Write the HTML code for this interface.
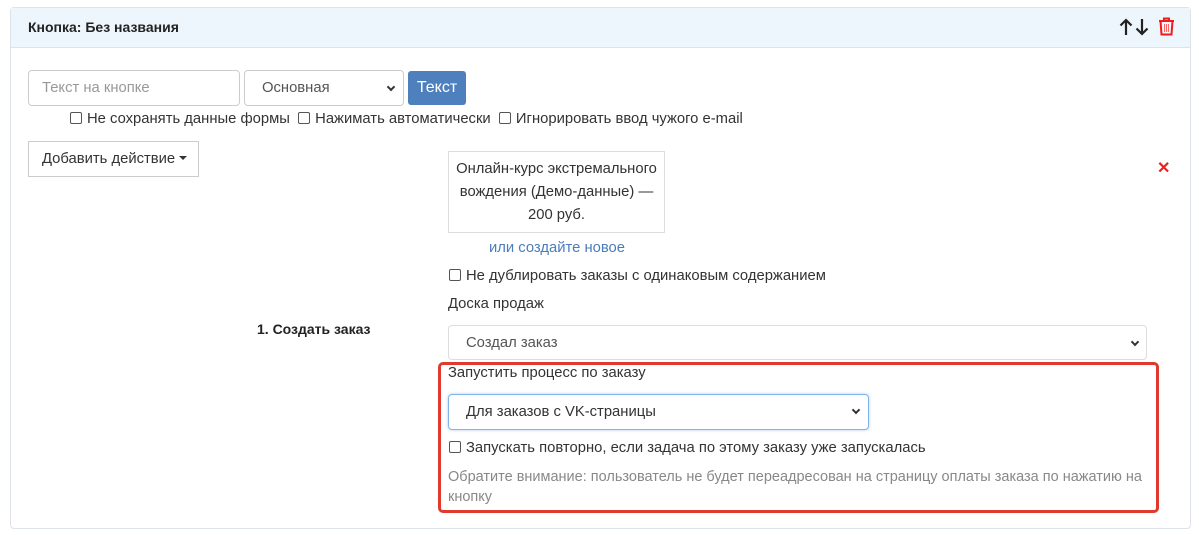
<!DOCTYPE html>
<html><head><meta charset="utf-8"><style>
*{box-sizing:border-box;margin:0;padding:0}
body{width:1199px;height:535px;background:#fff;font-family:"Liberation Sans",sans-serif;color:#333;font-size:14.8px;position:relative;overflow:hidden}
.a{position:absolute;white-space:nowrap}
.panel{position:absolute;left:10px;top:7px;width:1181px;height:522px;border:1px solid #dde3e8;border-radius:4px}
.hdr{position:absolute;left:11px;top:8px;width:1179px;height:40px;background:#eef6fd;border-bottom:1px solid #dde3e8}
.box{position:absolute;border:1px solid #ccc;border-radius:4px;background:#fff}
.cb{display:inline-block;width:12px;height:12px;border:1px solid #555;border-radius:2px;vertical-align:-1px;margin-right:5px;background:#fff}
.chev{position:absolute;width:6px;height:6px;border-right:2px solid #333;border-bottom:2px solid #333;transform:rotate(45deg)}
</style></head><body>
<div class="panel"></div>
<div class="hdr"></div>
<div class="a" style="left:28px;top:19px;font-weight:bold;font-size:14px;color:#222">Кнопка: Без названия</div>
<svg class="a" style="left:1119px;top:18px" width="32" height="18" viewBox="0 0 32 18"><path d="M7 17V2M1.5 7.5L7 2l5.5 5.5" stroke="#222" stroke-width="2.2" fill="none"/><path d="M23 1v15M17.5 10.5L23 16l5.5-5.5" stroke="#222" stroke-width="2.2" fill="none"/></svg>
<svg class="a" style="left:1158px;top:17px" width="17" height="19" viewBox="0 0 17 19"><path d="M1 4h15M6 4V1.5h5V4M2.5 4l1 13.5h10l1-13.5" stroke="#f01c1c" stroke-width="2" fill="none"/><path d="M6.5 7v8M8.5 7v8M10.5 7v8" stroke="#f66" stroke-width="1"/></svg>

<div class="box" style="left:28px;top:70px;width:212px;height:36px"></div>
<div class="a" style="left:42px;top:80px;color:#999">Текст на кнопке</div>
<div class="box" style="left:244px;top:70px;width:160px;height:36px"></div>
<div class="a" style="left:262px;top:80px;color:#555">Основная</div>
<div class="chev" style="left:388px;top:84px"></div>
<div class="a" style="left:408px;top:71px;width:58px;height:34px;background:#4f80be;border-radius:3px;color:#fff;font-size:16px;text-align:center;line-height:34px">Текст</div>
<div class="a" style="left:70px;top:111px"><span class="cb"></span>Не сохранять данные формы &nbsp;<span class="cb"></span>Нажимать автоматически &nbsp;<span class="cb"></span>Игнорировать ввод чужого e-mail</div>

<div class="box" style="left:28px;top:141px;width:171px;height:36px;border-radius:0;border-color:#ccc"></div>
<div class="a" style="left:42px;top:151px">Добавить действие <span style="display:inline-block;border-left:4px solid transparent;border-right:4px solid transparent;border-top:4px solid #333;vertical-align:3px"></span></div>

<div class="box" style="left:448px;top:151px;width:217px;height:82px;border-radius:0;border-color:#ddd"></div>
<div class="a" style="left:448px;top:158px;width:217px;text-align:center;line-height:23px;white-space:normal">Онлайн-курс экстремального<br>вождения (Демо-данные) —<br>200 руб.</div>
<div class="a" style="left:1157px;top:158px;color:#e8231f;font-size:16px;font-weight:bold">✕</div>
<div class="a" style="left:489px;top:240px;color:#4a7dba">или создайте новое</div>
<div class="a" style="left:449px;top:268px"><span class="cb"></span>Не дублировать заказы с одинаковым содержанием</div>
<div class="a" style="left:448px;top:296px">Доска продаж</div>
<div class="a" style="left:257px;top:321px;font-weight:bold;font-size:14px;color:#222">1. Создать заказ</div>
<div class="box" style="left:448px;top:325px;width:699px;height:35px;border-color:#ddd"></div>
<div class="a" style="left:466px;top:335px;color:#555">Создал заказ</div>
<div class="chev" style="left:1132px;top:339px"></div>

<div class="a" style="left:438px;top:362px;width:721px;height:151px;border:3px solid #e03a2f;border-radius:5px"></div>
<div class="a" style="left:448px;top:365px">Запустить процесс по заказу</div>
<div class="box" style="left:448px;top:394px;width:421px;height:36px;border-color:#80b4e8;box-shadow:0 0 3px rgba(100,160,230,.5)"></div>
<div class="a" style="left:466px;top:404px">Для заказов с VK-страницы</div>
<div class="chev" style="left:853px;top:407px"></div>
<div class="a" style="left:449px;top:440px"><span class="cb"></span>Запускать повторно, если задача по этому заказу уже запускалась</div>
<div class="a" style="left:448px;top:467px;color:#888;line-height:20px;font-size:14.5px">Обратите внимание: пользователь не будет переадресован на страницу оплаты заказа по нажатию на<br>кнопку</div>
</body></html>
